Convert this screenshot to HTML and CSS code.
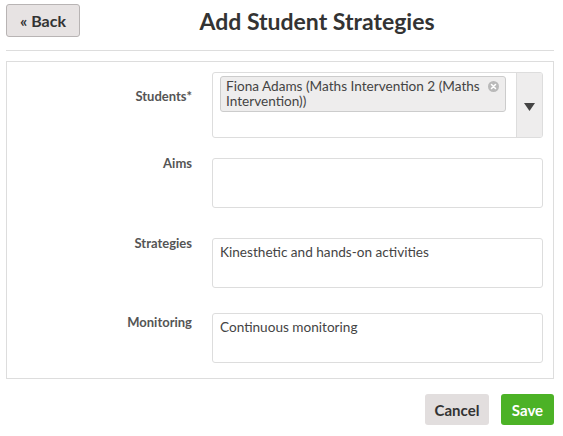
FILE: index.html
```html
<!DOCTYPE html>
<html>
<head>
<meta charset="utf-8">
<link rel="stylesheet" href="styles.css">
</head>
<body>
<div class="page">
  <header class="header">
    <button class="btn-back">« Back</button>
    <h1 class="title">Add Student Strategies</h1>
  </header>
  <div class="rule"></div>
  <form class="panel">
    <div class="row row-students">
      <label class="label label-students">Students*</label>
      <div class="select">
        <div class="select-body">
          <span class="tag">
            <span class="tag-text">Fiona Adams (Maths Intervention 2 (Maths Intervention))</span>
            <span class="tag-remove">
              <svg width="11" height="11" viewBox="0 0 11 11"><circle cx="5.5" cy="5.5" r="5.5" fill="#b9b9b9"/><path d="M3.5 3.5 L7.5 7.5 M7.5 3.5 L3.5 7.5" stroke="#fff" stroke-width="1.6" stroke-linecap="round"/></svg>
            </span>
          </span>
        </div>
        <div class="select-arrow">
          <svg width="11" height="8" viewBox="0 0 11 8"><path d="M0 0 H11 L5.5 8 Z" fill="#444"/></svg>
        </div>
      </div>
    </div>
    <div class="row row-aims">
      <label class="label label-aims">Aims</label>
      <div class="field"></div>
    </div>
    <div class="row row-strategies">
      <label class="label label-strategies">Strategies</label>
      <div class="field">Kinesthetic and hands-on activities</div>
    </div>
    <div class="row row-monitoring">
      <label class="label label-monitoring">Monitoring</label>
      <div class="field">Continuous monitoring</div>
    </div>
  </form>
  <div class="actions">
    <button class="btn btn-cancel">Cancel</button>
    <button class="btn btn-save">Save</button>
  </div>
</div>
</body>
</html>
```
FILE: styles.css
```css
* { box-sizing: border-box; }
html, body { margin: 0; padding: 0; background: #fff; }
body {
  font-family: Lato, "Open Sans", sans-serif;
  color: #444;
}
.page {
  padding: 4px 9px 0 6px;
}
.header {
  display: flex;
  align-items: center;
  height: 33px;
}
.btn-back {
  width: 74px;
  height: 33px;
  background: #e7e3e3;
  border: 1px solid #b8b4b4;
  border-radius: 3px;
  font-family: inherit;
  font-size: 16px;
  font-weight: 700;
  color: #333;
  padding: 0;
}
.title {
  flex: 1;
  margin: 0;
  text-align: center;
  font-size: 23px;
  font-weight: 700;
  color: #333;
}
.rule {
  height: 1px;
  background: #ddd;
  margin-top: 13px;
}
.panel {
  margin-top: 10px;
  border: 1px solid #ddd;
  padding: 10px 10px 15px 0;
}
.row {
  display: flex;
  align-items: flex-start;
}
.row-aims { margin-top: 20px; }
.row-strategies { margin-top: 30px; }
.row-monitoring { margin-top: 25px; }
.label {
  width: 185px;
  flex: none;
  text-align: right;
  font-size: 13px;
  font-weight: 700;
  color: #555;
  line-height: 18px;
  margin-right: 20px;
}
.label-students { padding-top: 15px; }
.label-aims { margin-top: -4px; }
.label-strategies { margin-top: -4px; }
.label-monitoring { padding-top: 0; }
.select {
  flex: 1;
  display: flex;
  height: 66px;
  border: 1px solid #ddd;
  border-radius: 3px;
  overflow: hidden;
}
.select-body {
  flex: 1;
  padding: 3px 0 0 7px;
}
.tag {
  display: flex;
  align-items: flex-start;
  width: 286px;
  background: #eeeded;
  border: 1px solid #ccc;
  border-radius: 3px;
  padding: 2px 6px 2px 5px;
}
.tag-text {
  flex: 1;
  font-size: 13.6px;
  line-height: 15px;
  color: #444;
}
.tag-remove {
  display: flex;
  padding-top: 2px;
  margin-left: 4px;
}
.select-arrow {
  width: 26px;
  flex: none;
  background: #eeeded;
  border-left: 1px solid #ddd;
  display: flex;
  align-items: center;
  justify-content: center;
  padding-top: 4px;
}
.field {
  flex: 1;
  height: 50px;
  border: 1px solid #ddd;
  border-radius: 3px;
  padding: 4px 7px;
  font-size: 13.6px;
  line-height: 18px;
  color: #444;
}
.actions {
  display: flex;
  justify-content: flex-end;
  gap: 12px;
  margin-top: 15px;
}
.btn {
  height: 31px;
  border: none;
  border-radius: 3px;
  font-family: inherit;
  font-size: 15px;
  font-weight: 700;
  padding: 0;
}
.btn-cancel {
  width: 64px;
  background: #e2dede;
  color: #333;
}
.btn-save {
  width: 53px;
  background: #4cb226;
  color: #fff;
}
```
